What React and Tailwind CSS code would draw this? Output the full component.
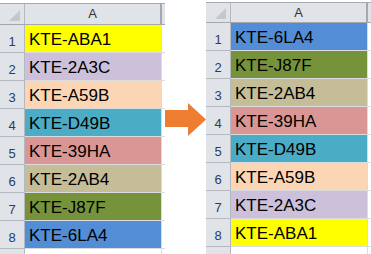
import React from "react";

const before = [
  { label: "KTE-ABA1", color: "bg-[#ffff00]" },
  { label: "KTE-2A3C", color: "bg-[#ccc0da]" },
  { label: "KTE-A59B", color: "bg-[#fcd5b4]" },
  { label: "KTE-D49B", color: "bg-[#4bacc6]" },
  { label: "KTE-39HA", color: "bg-[#da9694]" },
  { label: "KTE-2AB4", color: "bg-[#c4bd97]" },
  { label: "KTE-J87F", color: "bg-[#76933c]" },
  { label: "KTE-6LA4", color: "bg-[#538dd5]" },
];

const after = [...before].reverse();

const Sheet = ({ rows, top, headerH, tail }) => (
  <div className={top}>
    <div className={`flex border-y border-[#a5a9ae] bg-[#e0e3e8] ${headerH}`}>
      <div className="relative w-[25px] shrink-0 border-r border-[#b5b9bf]">
        <svg className="absolute right-[4px] bottom-[3px]" width="11" height="11">
          <polygon points="11,0 11,11 0,11" fill="#c4c7cb" />
        </svg>
      </div>
      <div className="flex w-[137px] shrink-0 items-center justify-center border-r-2 border-[#a5a9ae] text-[13px] text-[#333]">
        A
      </div>
      <div className={tail} />
    </div>
    {rows.map((row, i) => (
      <div key={row.label} className="flex h-[28px]">
        <div className="flex w-[25px] shrink-0 items-end justify-center border-r border-b border-[#b5b9bf] bg-[#e0e3e8] pb-[4px] text-[13px] leading-none text-[#2a3d5c]">
          {i + 1}
        </div>
        <div
          className={`flex w-[137px] shrink-0 items-end border-r border-b border-[#dadcdd] pb-[4px] pl-[4px] text-[17px] leading-none text-black ${row.color}`}
        >
          {row.label}
        </div>
        <div className={`${tail} border-b border-[#dadcdd]`} />
      </div>
    ))}
    <div className="flex h-[10px]">
      <div className="w-[25px] shrink-0 border-r border-[#b5b9bf] bg-[#e0e3e8]" />
      <div className="w-[137px] shrink-0 border-r border-[#dadcdd]" />
    </div>
  </div>
);

export default function App() {
  return (
    <div
      className="flex h-[254px] w-[371px] overflow-hidden bg-white"
      style={{ fontFamily: '"Liberation Sans", Arial, sans-serif' }}
    >
      <Sheet rows={before} top="pt-[3px]" headerH="h-[22px]" tail="w-[3px]" />
      <div className="flex w-[41px] shrink-0 items-start pt-[103px]">
        <svg width="41" height="34" viewBox="0 0 41 34">
          <polygon points="0,7 23,7 23,0 41,16.5 23,33 23,24 0,24" fill="#ed7d31" />
        </svg>
      </div>
      <Sheet rows={after} top="pt-[2px]" headerH="h-[21px]" tail="w-[3px]" />
    </div>
  );
}
